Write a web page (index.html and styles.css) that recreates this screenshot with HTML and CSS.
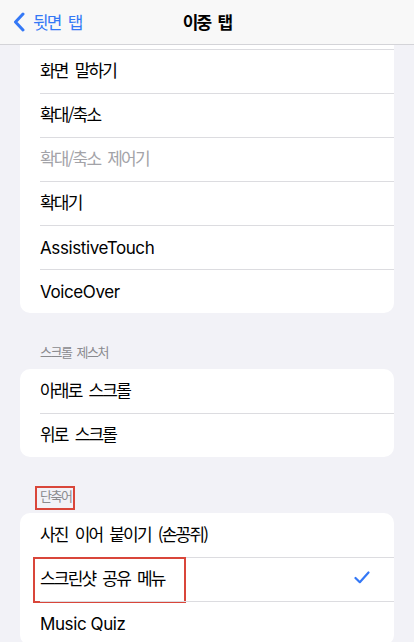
FILE: index.html
```html
<!DOCTYPE html>
<html lang="ko">
<head>
<meta charset="utf-8">
<title>이중 탭</title>
<link rel="stylesheet" href="styles.css">
</head>
<body>
<header class="nav">
  <a class="back">
    <svg class="chev" width="12" height="20" viewBox="0 0 12 20"><path d="M10 2 L2.5 10 L10 18" fill="none" stroke="#3478f6" stroke-width="3" stroke-linecap="round" stroke-linejoin="round"/></svg>
    <span class="ko">뒷면 탭</span>
  </a>
  <h1 class="title ko">이중 탭</h1>
  <span></span>
</header>
<main class="content">
  <section class="card card-top">
    <div class="row line ko">화면 말하기</div>
    <div class="row ko">확대/축소</div>
    <div class="row ko dim">확대/축소 제어기</div>
    <div class="row ko">확대기</div>
    <div class="row">AssistiveTouch</div>
    <div class="row">VoiceOver</div>
  </section>
  <h2 class="head ko">스크롤 제스처</h2>
  <section class="card">
    <div class="row ko">아래로 스크롤</div>
    <div class="row ko">위로 스크롤</div>
  </section>
  <h2 class="head ko"><span class="mark-head">단축어</span></h2>
  <section class="card">
    <div class="row ko">사진 이어 붙이기 (손꽁쥐)</div>
    <div class="row ko mark-row"><span>스크린샷 공유 메뉴</span>
      <svg class="check" width="16" height="13" viewBox="0 0 16 13"><path d="M1.5 7 L5.8 11.2 L14.5 1.5" fill="none" stroke="#3478f6" stroke-width="2.2" stroke-linecap="round" stroke-linejoin="round"/></svg>
    </div>
    <div class="row">Music Quiz</div>
  </section>
</main>
</body>
</html>
```
FILE: styles.css
```css
* { box-sizing: border-box; }
html, body {
  margin: 0;
  padding: 0;
  height: 642px;
  overflow: hidden;
}
body {
  background: #f2f2f7;
  font-family: Inter, "Noto Sans CJK KR", sans-serif;
  color: #000;
  -webkit-font-smoothing: antialiased;
}
.ko {
  font-family: "Noto Sans CJK KR", sans-serif;
  letter-spacing: -1.8px;
  word-spacing: 4px;
}
.nav {
  height: 45px;
  background: #f8f8f8;
  border-bottom: 1px solid #d4d4d8;
  display: grid;
  grid-template-columns: 1fr auto 1fr;
  align-items: center;
}
.back {
  display: flex;
  align-items: center;
  gap: 8px;
  padding-left: 13px;
  color: #3478f6;
  font-size: 17px;
}
.back .ko { padding-bottom: 2px; }
.chev { display: block; }
.title {
  margin: 0;
  padding-bottom: 2px;
  font-size: 17px;
  font-weight: 600;
}
.content {
  padding: 0 20px;
}
.card {
  background: #fff;
  border-radius: 10px;
}
.card-top {
  border-radius: 0 0 10px 10px;
  padding-top: 4px;
}
.row {
  position: relative;
  height: 44px;
  margin-left: 20px;
  padding-right: 24px;
  display: flex;
  align-items: center;
  justify-content: space-between;
  font-size: 17px;
  letter-spacing: -0.4px;
}
.row.ko {
  letter-spacing: -1.8px;
  padding-bottom: 4px;
}
.row + .row, .row.line {
  border-top: 1px solid #dcdce0;
}
.dim { color: #a3a3a8; }
.head {
  margin: 0;
  padding: 30px 0 8px 20px;
  line-height: 18px;
  font-size: 13px;
  font-weight: 400;
  color: #8a8a8e;
  letter-spacing: -1.5px;
  word-spacing: 3px;
}
.mark-head {
  position: relative;
  display: inline-block;
  line-height: 18px;
}
.mark-head::after {
  content: "";
  position: absolute;
  top: -1px;
  bottom: -5px;
  left: -5px;
  right: -4px;
  border: 2px solid #d9463a;
}
.mark-row::after {
  content: "";
  position: absolute;
  top: -1px;
  bottom: -2px;
  left: -7px;
  width: 149px;
  border: 2px solid #d9463a;
}
.check { display: block; }
```
